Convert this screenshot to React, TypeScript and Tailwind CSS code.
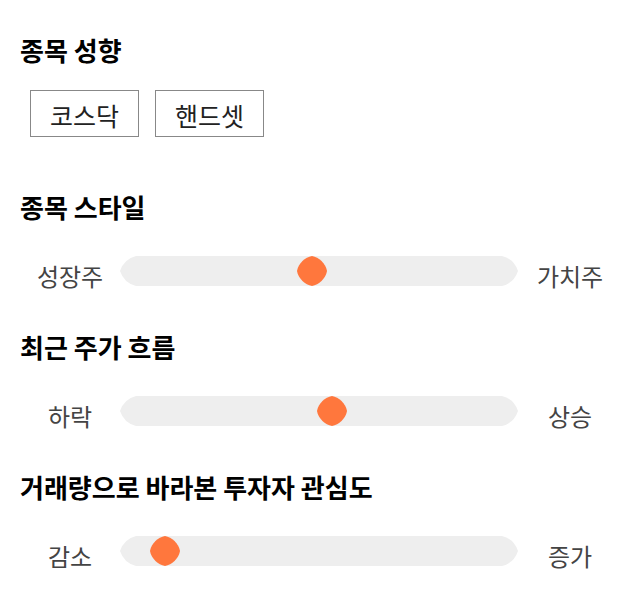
import React from 'react';

const font = "font-['Noto_Sans_CJK_KR','Noto_Sans',sans-serif]";

function Thumb({ left }: { left: number }) {
  return (
    <svg
      className="absolute top-0"
      style={{ left }}
      width="30"
      height="30"
      viewBox="0 0 30 30"
    >
      <path
        d="M15,0 C22,1.5 28.5,7 30,15 C28.5,23 22,28.5 15,30 C8,28.5 1.5,23 0,15 C1.5,7 8,1.5 15,0Z"
        fill="#ff773d"
      />
    </svg>
  );
}

function Slider({ left, right, thumb }: { left: string; right: string; thumb: number }) {
  return (
    <div className="flex items-center h-[30px]">
      <div className="w-[100px] pt-[9px] text-center text-[24px] leading-[30px] text-[#444]">{left}</div>
      <div className="relative w-[400px] h-[30px]">
        <div className="w-[400px] h-[30px] bg-[#eeeeee] [clip-path:path('M16,0_L382,0_Q394,3_398,15_Q394,27_382,30_L16,30_Q4,27_0,15_Q4,3_16,0Z')]" />
        <Thumb left={thumb} />
      </div>
      <div className="w-[100px] pt-[9px] text-center text-[24px] leading-[30px] text-[#444]">{right}</div>
    </div>
  );
}

function Heading({ children, className = '' }: { children: React.ReactNode; className?: string }) {
  return <h2 className={`text-[26px] leading-[30px] font-bold text-black ${className}`}>{children}</h2>;
}

export default function App() {
  return (
    <div className={`${font} w-[640px] h-[606px] bg-white pl-[20px] pt-[35px]`}>
      <Heading>종목 성향</Heading>
      <div className="flex gap-[16px] ml-[10px] mt-[25px]">
        <button className="w-[109px] h-[47px] pt-[4px] flex items-center justify-center border border-[#888] text-[25px] text-[#222]">
          코스닥
        </button>
        <button className="w-[109px] h-[47px] pt-[4px] flex items-center justify-center border border-[#888] text-[25px] text-[#222]">
          핸드셋
        </button>
      </div>

      <Heading className="mt-[55px]">종목 스타일</Heading>
      <div className="mt-[34px]">
        <Slider left="성장주" right="가치주" thumb={177} />
      </div>

      <Heading className="mt-[46px]">최근 주가 흐름</Heading>
      <div className="mt-[34px]">
        <Slider left="하락" right="상승" thumb={197} />
      </div>

      <Heading className="mt-[46px]">거래량으로 바라본 투자자 관심도</Heading>
      <div className="mt-[34px]">
        <Slider left="감소" right="증가" thumb={30} />
      </div>
    </div>
  );
}
